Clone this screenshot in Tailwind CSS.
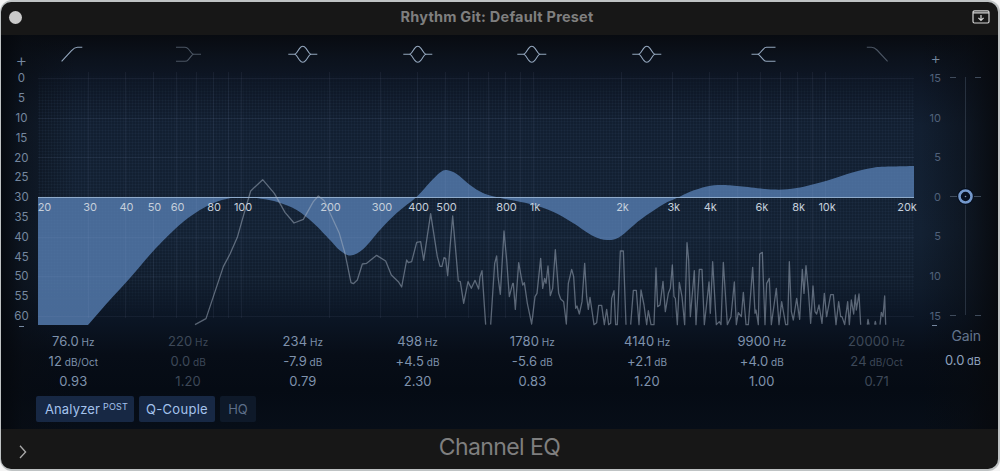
<!DOCTYPE html>
<html lang="en">
<head>
  <meta charset="UTF-8" />
  <meta name="viewport" content="width=device-width, initial-scale=1.0" />
  <title>Channel EQ</title>
  <script src="https://cdn.jsdelivr.net/npm/@tailwindcss/browser@4"></script>
</head>
<body class="w-[1000px] h-[471px] overflow-hidden bg-[#f4f4f4] font-['Inter','Liberation_Sans',sans-serif]">
  <div class="w-[1000px] h-[471px] pt-[2px] pl-px rounded-[12px] bg-[#bfc3c4]">
    <div class="w-[997px] h-[467px] rounded-[10px] overflow-hidden bg-[#171717] flex flex-col">

      <!-- title bar -->
      <header class="h-[33px] shrink-0 flex items-center justify-between pl-2 pr-2 pb-[3px]">
        <span class="size-[13px] rounded-full bg-[#cacaca]"></span>
        <h1 id="title" class="text-[14.5px] leading-4 font-bold text-[#7f7f7f] tracking-[0.22px]">Rhythm Git: Default Preset</h1>
        <svg class="w-[18px] h-[14px]" viewBox="0 0 18 14" fill="none" stroke="#d6d6d6">
          <rect x="1" y="0.8" width="16" height="12.2" rx="1.5" stroke-width="1.2" />
          <path d="M1 2.9H17" stroke-width="1.1" />
          <path d="M9 5V10.2M6.4 7.8L9 10.4L11.6 7.8" stroke-width="1.2" />
        </svg>
      </header>

      <main class="h-[394px] shrink-0 flex bg-[linear-gradient(90deg,#05080deb_0,#080c1288_22px,#080c1200_75px,#080c1200_920px,#080b1077_965px,#07090dee_998px),linear-gradient(180deg,#080b11_0,#0b111b_20px,#0e1726_48px,#121f31_90px,#132133_200px,#101c2c_250px,#0b1524_285px,#070d17_320px,#050b14_355px,#070e18_394px)]">

        <!-- analyzer scale -->
        <div id="leftScale" class="w-9 shrink-0 pt-4 pl-[5px] text-center text-[11.5px] text-[#75879f]">
          <div class="h-[18.4px] leading-[19px] text-[18px] font-light">+</div>
        </div>

        <!-- graph and bands -->
        <div class="w-[877px] shrink-0 flex flex-col">
          <div id="icons" class="h-[35px] -ml-[21px] -mr-[20px] pt-[9px] grid grid-cols-8 justify-items-center text-[#93a6bd]">
            <svg class="w-8 h-5" viewBox="0 0 32 20" fill="none" stroke="currentColor" stroke-width="1.1"><path d="M4.6 17.3L14.3 6.8Q17.5 3.3 20.5 3.3H25.3" /></svg>
            <svg class="w-8 h-5 text-[#4b5563]" viewBox="0 0 32 20" fill="none" stroke="currentColor" stroke-width="1.1"><path d="M4 3.3H13Q15 3.3 16.4 5L19.6 9Q20.6 10.3 22 10.3H29M4 17.3H13Q15 17.3 16.4 15.6L19.6 11.6Q20.6 10.3 22 10.3" /></svg>
            <svg class="w-8 h-5" viewBox="0 0 32 20" fill="none" stroke="currentColor" stroke-width="1.1"><use href="#bell" /></svg>
            <svg class="w-8 h-5" viewBox="0 0 32 20" fill="none" stroke="currentColor" stroke-width="1.1"><use href="#bell" /></svg>
            <svg class="w-8 h-5" viewBox="0 0 32 20" fill="none" stroke="currentColor" stroke-width="1.1"><use href="#bell" /></svg>
            <svg class="w-8 h-5" viewBox="0 0 32 20" fill="none" stroke="currentColor" stroke-width="1.1"><path id="bell" d="M1.3 10.3H7Q8.6 10.3 9.6 8.8L12.6 4.4Q14.2 2.3 15.8 2.3T19 4.4L22 8.8Q23 10.3 24.6 10.3H30.3M7 10.3Q8.6 10.3 9.6 11.8L12.6 16.2Q14.2 18.3 15.8 18.3T19 16.2L22 11.8Q23 10.3 24.6 10.3" /></svg>
            <svg class="w-8 h-5" viewBox="0 0 32 20" fill="none" stroke="currentColor" stroke-width="1.1"><path d="M29.5 3.3H20.5Q18.8 3.3 17.6 4.8L13.8 9Q12.8 10.3 11.2 10.3H5.5M29.5 17.3H20.5Q18.8 17.3 17.6 15.8L13.8 11.6Q12.8 10.3 11.2 10.3" /></svg>
            <svg class="w-8 h-5 text-[#4b5563]" viewBox="0 0 32 20" fill="none" stroke="currentColor" stroke-width="1.1"><path d="M5.8 3.3H10.5Q13.4 3.3 16 6L26.6 17.3" /></svg>
          </div>

          <svg id="plot" class="w-[877px] h-[260px] shrink-0 overflow-visible" viewBox="37 70 877 260">
            <defs>
              <pattern id="fine" width="3" height="3" patternUnits="userSpaceOnUse">
                <path d="M0.5 0V3M0 1.5H3" stroke="#5f84ad" stroke-opacity="0.05" />
              </pattern>
              <linearGradient id="fade" x1="0" y1="0" x2="0" y2="1">
                <stop offset="0" stop-color="#fff" stop-opacity="0.1" />
                <stop offset="0.12" stop-color="#fff" />
                <stop offset="0.85" stop-color="#fff" />
                <stop offset="1" stop-color="#fff" stop-opacity="0" />
              </linearGradient>
              <mask id="soft"><rect x="37" y="72" width="877" height="246" fill="url(#fade)" /></mask>
            </defs>
            <path id="eq" fill="#486a97" />
            <g mask="url(#soft)">
              <rect x="38" y="72" width="876" height="246" fill="url(#fine)" />
            </g>
            <path id="grid" stroke="#a5bfe0" stroke-opacity="0.07" fill="none" />
            <path d="M38 197.5H914" stroke="#8fabcb" />
            <g fill="none" stroke="#a8b4c4" stroke-opacity="0.5" stroke-width="1.3" stroke-linejoin="round">
              <polyline transform="translate(230 150) scale(.33333)" vector-effect="non-scaling-stroke" points="-105,524 -72,506 -20,350 0,312 22,262 38,205 62,123 98,89 133,130 165,187 192,219 220,208 250,155 265,138 283,152 328,250 345,310 363,398 370,401 382,390 397,342 410,340 440,316 467,333 484,375 505,395 515,411 530,330 535,338 545,335 560,277 572,275 581,331 602,191 622,320 630,349 636,349 642,323 647,325 653,377 668,198 685,393 691,395 701,460 714,395 724,415 735,391 746,417 750,380 756,362 767,524" />
              <polyline transform="translate(430 150) scale(.33333)" vector-effect="non-scaling-stroke" points="182,524 194,340 200,318 204,380 211,433 222,243 230,330 238,440 248,400 250,400 256,478 266,338 278,405 283,398 292,460 305,522 315,440 321,430 332,325 338,415 344,385 348,400 354,348 361,437 368,415 376,299 386,430 392,447 401,455 409,522 415,400 425,358 431,380 437,475 441,468 448,492 456,455 464,340 470,440 475,478 480,442 492,524 500,518 506,466 515,466 523,524 530,478 536,524 542,520 545,445 552,422 557,524 562,524 571,303 580,303 588,524" />
              <polyline transform="translate(640 150) scale(.33333)" vector-effect="non-scaling-stroke" points="-28,524 -20,421 -11,421 -3,524 3,420 12,465 20,524 25,482 33,524 42,524 48,354 53,470 60,465 69,394 76,485 85,430 91,415 97,345 102,440 106,445 112,524 118,397 126,440 134,524 141,278 146,330 151,500 163,362 168,524 178,358 186,358 193,524 207,396 211,490 218,335 229,524 238,515 243,524 250,337 262,524 273,500 283,396 289,524 295,488 304,500 310,427 318,524 325,524 338,352 345,490 348,480 355,524 359,312 367,307 375,524 380,400 388,385 394,524 409,415 417,524 425,455 437,524 443,524 448,335 454,485 460,510 470,445 479,508 487,358 492,430 498,347 505,420 512,520 519,408 525,485 530,492 537,465 546,520 553,430 560,500 572,434 580,434 588,524 596,455 602,500 606,500 614,524 623,455 628,524 634,450 641,492 646,435 649,480 657,432 662,524" />
              <path transform="translate(640 150) scale(.33333)" vector-effect="non-scaling-stroke" d="M682 524L684 508L687 524M704 524L706 514L708 524M720 524L724 487L729 500L734 438L737 524" />
            </g>
            <g id="freqs" class="text-[11px] tracking-[-0.1px]" fill="#c5cfdb" text-anchor="middle"></g>
          </svg>

          <div id="bands" class="h-[61px] shrink-0 -ml-[21px] -mr-[20px] pt-px grid grid-cols-8 text-center text-[13px] leading-5 tracking-[0.1px] text-[#7f92ac] whitespace-nowrap"></div>

          <div class="mt-[5px] -ml-px h-[26px] flex gap-[5px] text-[13px] text-[#a4c2ec]">
            <button class="w-[98px] rounded-[2px] bg-[#172844] flex items-center justify-center tracking-[0.15px] pl-[3px] pt-px">Analyzer<sup class="text-[9px] tracking-[0.2px] ml-[3px] top-[-3px]">POST</sup></button>
            <button class="w-[76px] rounded-[2px] bg-[#172844] tracking-[0.3px] pt-px">Q-Couple</button>
            <button class="w-9 rounded-[2px] bg-[#0e1929] text-[#5c6e88] pt-px">HQ</button>
          </div>
        </div>

        <!-- gain scale and slider -->
        <div class="grow flex flex-col">
          <div class="flex h-[291px]">
            <div id="rightScale" class="w-[27px] pt-[14px] text-right text-[11px] text-[#50617a]">
              <div class="h-[10px] leading-[19px] text-[16px] font-light text-[#75879f]">+</div>
            </div>
            <svg class="w-12 h-[291px]" viewBox="941 35 48 291" fill="none">
              <path d="M965.5 77V315" stroke="#27313f" />
              <path d="M950 77.5H956M975 77.5H981M950 196.5H957M974 196.5H981M950 315.5H956M975 315.5H981" stroke="#3f4b5b" />
              <circle cx="965.5" cy="196.5" r="8.4" fill="#07101f" />
              <circle cx="965.5" cy="196.5" r="6" stroke="#7499cc" stroke-width="2.6" />
              <circle cx="965.5" cy="196.5" r="0.8" fill="#8193aa" />
            </svg>
          </div>
          <div class="pr-[17px] text-right leading-5">
            <div class="text-[14px] text-[#63748c] tracking-[-0.1px]">Gain</div>
            <div class="mt-[4px] text-[13px] text-[#8da1bd]">0.0 <span class="text-[11px] -ml-px">dB</span></div>
          </div>
        </div>
      </main>

      <!-- footer -->
      <footer class="grow relative flex items-center justify-center">
        <svg class="absolute left-[17px] top-[15px] w-[10px] h-[15px]" viewBox="0 0 10 15" fill="none" stroke="#a9a9a9" stroke-width="1.3"><path d="M2 1.8L7.6 8L2 14" /></svg>
        <h2 class="text-[23px] leading-7 tracking-[-0.6px] text-[#7f7f7f] pb-1">Channel EQ</h2>
      </footer>
    </div>
  </div>

  <script>
    const xOf = f => 38 + 292 * Math.log10(f / 20);

    // grid lines
    let d = '';
    for (const dec of [10, 100, 1000, 10000]) {
      for (let n = 1; n < 10; n++) {
        const f = dec * n;
        if (f > 20 && f <= 10000) d += `M${Math.round(xOf(f)) - 0.5} 72V318`;
      }
    }
    for (const y of [78.5, 118.5, 157.5, 237.5, 276.5, 316.5]) d += `M38 ${y}H914`;
    document.getElementById('grid').setAttribute('d', d);

    // eq response
    const pts = [
      [88, 325], [109, 301], [130, 278], [153.3, 251], [176.7, 227.5], [195, 213.3], [213, 203.3], [231, 198],
      [250, 197.4], [263, 199], [278, 202.3], [296.7, 210], [313.3, 223], [330, 240], [340, 250.5], [350.5, 255.5],
      [363.3, 249], [380, 230], [396.7, 213], [416.5, 197], [430, 182.3], [440, 172.5], [446.7, 170], [456.7, 174],
      [470, 185], [483, 193], [498, 197.5], [530, 204], [553, 211.7], [573, 223], [593, 236], [607, 240],
      [620, 236.7], [640, 220], [663, 204.5], [678, 197.5], [690, 191.7], [706.7, 186.4], [721.7, 185], [740, 186.3],
      [773.3, 189.6], [796.7, 188], [826.7, 180.7], [853.3, 172.3], [873.3, 167.7], [890, 166.6], [914, 166]
    ];
    let curve = `M38 197V325H${pts[0][0]}`;
    for (let i = 0; i < pts.length - 1; i++) {
      const a = pts[i - 1] || pts[i], b = pts[i], c = pts[i + 1], e = pts[i + 2] || c;
      curve += `C${b[0] + (c[0] - a[0]) / 6} ${b[1] + (c[1] - a[1]) / 6} ${c[0] - (e[0] - b[0]) / 6} ${c[1] - (e[1] - b[1]) / 6} ${c[0]} ${c[1]}`;
    }
    document.getElementById('eq').setAttribute('d', curve + 'V197.5H38Z');

    // frequency labels
    const freqs = [['20', 44.5], ['30', 90], ['40', 126.5], ['50', 154.5], ['60', 177.5], ['80', 214], ['100', 243], ['200', 330.5],
      ['300', 382], ['400', 418.5], ['500', 446.5], ['800', 506.5], ['1k', 535], ['2k', 622.5], ['3k', 673.7], ['4k', 710.3],
      ['6k', 761.8], ['8k', 798.5], ['10k', 827], ['20k', 907]];
    document.getElementById('freqs').innerHTML = freqs.map(([t, x]) => `<text x="${x}" y="211">${t}</text>`).join('');

    // side scales
    const left = document.getElementById('leftScale');
    for (let v = 0; v <= 60; v += 5) left.innerHTML += `<div class="h-[19.8px] leading-[19.8px]">${v}</div>`;
    left.innerHTML += '<div class="w-[5px] h-px mx-auto -mt-px bg-[#75879f]"></div>';
    const right = document.getElementById('rightScale');
    for (const v of [15, 10, 5, 0, 5, 10, 15]) right.innerHTML += `<div class="h-[39.6px] leading-[39.6px]">${v}</div>`;
    right.innerHTML += '<div class="w-[5px] h-px ml-auto mr-1 -mt-[11px] bg-[#75879f]"></div>';

    // band values
    const bands = [
      ['76.0', '12', 'dB/Oct', '0.93', 1],
      ['220', '0.0', 'dB', '1.20', 0],
      ['234', '-7.9', 'dB', '0.79', 1],
      ['498', '+4.5', 'dB', '2.30', 1],
      ['1780', '-5.6', 'dB', '0.83', 1],
      ['4140', '+2.1', 'dB', '1.20', 1],
      ['9900', '+4.0', 'dB', '1.00', 1],
      ['20000', '24', 'dB/Oct', '0.71', 0]
    ];
    document.getElementById('bands').innerHTML = bands.map(([hz, gain, unit, q, on]) => `
      <div class="${on ? '' : 'text-[#3d4858]'}">
        <div class="h-5">${hz} <span class="text-[10px] -ml-px">Hz</span></div>
        <div class="h-5">${gain} <span class="text-[10px] -ml-px">${unit}</span></div>
        <div class="h-5">${q}</div>
      </div>`).join('');
  </script>
</body>
</html>
